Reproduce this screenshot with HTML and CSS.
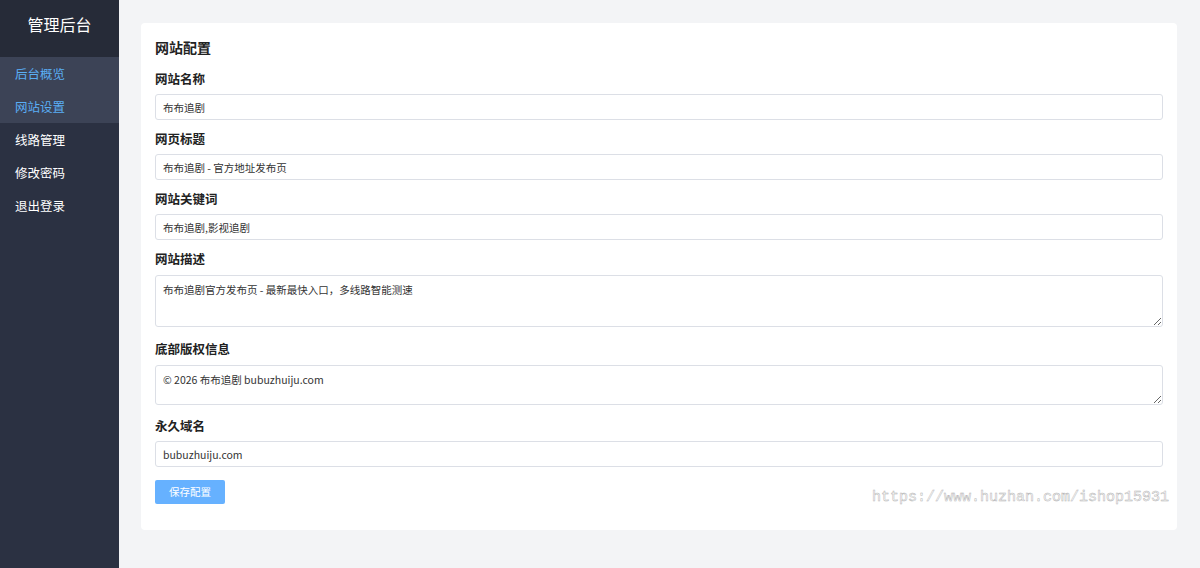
FILE: index.html
```html
<!DOCTYPE html>
<html lang="zh-CN">
<head>
    <meta charset="UTF-8">
    <meta name="viewport" content="width=device-width, initial-scale=1.0">
    <title>网站设置 - 管理后台</title>
    <link rel="stylesheet" href="styles.css">
</head>
<body>
    <div class="layout">
        <aside class="sidebar">
            <div class="brand">管理后台</div>
            <nav class="menu">
                <a class="menu-item active" href="#">后台概览</a>
                <a class="menu-item active" href="#">网站设置</a>
                <a class="menu-item" href="#">线路管理</a>
                <a class="menu-item" href="#">修改密码</a>
                <a class="menu-item" href="#">退出登录</a>
            </nav>
        </aside>

        <main class="main">
            <div class="card">
                <h2 class="card-title">网站配置</h2>
                <form class="form">
                    <div class="field">
                        <label>网站名称</label>
                        <input type="text" value="布布追剧">
                    </div>
                    <div class="field">
                        <label>网页标题</label>
                        <input type="text" value="布布追剧 - 官方地址发布页">
                    </div>
                    <div class="field">
                        <label>网站关键词</label>
                        <input type="text" value="布布追剧,影视追剧">
                    </div>
                    <div class="field">
                        <label>网站描述</label>
                        <textarea class="tall">布布追剧官方发布页 - 最新最快入口，多线路智能测速</textarea>
                    </div>
                    <div class="field">
                        <label>底部版权信息</label>
                        <textarea class="short">© 2026 布布追剧 bubuzhuiju.com</textarea>
                    </div>
                    <div class="field">
                        <label>永久域名</label>
                        <input type="text" value="bubuzhuiju.com">
                    </div>
                    <button type="button" class="btn">保存配置</button>
                </form>
                <div class="watermark">https://www.huzhan.com/ishop15931</div>
            </div>
        </main>
    </div>
</body>
</html>
```

FILE: styles.css
```css
* {
    box-sizing: border-box;
}
body {
    margin: 0;
    font-family: "Microsoft YaHei", "Noto Sans CJK SC", "Noto Sans", sans-serif;
    color: #333;
    background: #f3f4f6;
}
.layout {
    display: flex;
    min-height: 100vh;
}
.sidebar {
    width: 119px;
    flex-shrink: 0;
    background: #2b3142;
    color: #fff;
}
.brand {
    height: 57px;
    padding-top: 13px;
    line-height: 22px;
    text-align: center;
    font-size: 16px;
    background: #262b38;
}
.menu {
    display: flex;
    flex-direction: column;
}
.menu-item {
    height: 33px;
    line-height: 33px;
    padding-left: 15px;
    font-size: 12.5px;
    color: #fff;
    text-decoration: none;
}
.menu-item.active {
    background: #3c4356;
    color: #5aaef5;
}
.main {
    flex: 1;
    padding: 23px 23px 0 22px;
}
.card {
    position: relative;
    background: #fff;
    border-radius: 4px;
    padding: 14px 14px 26px;
    height: 507px;
}
.card-title {
    margin: 0 0 13px;
    font-size: 14px;
    line-height: 20px;
    font-weight: bold;
    color: #222;
}
.field label {
    display: block;
    font-size: 12.5px;
    line-height: 18px;
    font-weight: bold;
    color: #222;
    margin-bottom: 6px;
}
.field input,
.field textarea {
    display: block;
    width: 100%;
    border: 1px solid #dcdfe6;
    border-radius: 3px;
    padding: 0 7px;
    font-family: inherit;
    font-size: 10.5px;
    color: #333;
    margin-bottom: 10px;
}
.field input {
    height: 26px;
}
.field textarea {
    padding-top: 6px;
    line-height: 15px;
    margin-top: 7px;
    margin-bottom: 13px;
}
.field textarea.tall {
    height: 52px;
}
.field textarea.short {
    height: 40px;
    margin-bottom: 12px;
}
.btn {
    margin-top: 2px;
    width: 70px;
    height: 24px;
    border: none;
    border-radius: 2px;
    background: #66b1ff;
    color: #fff;
    font-family: inherit;
    font-size: 10.5px;
    cursor: pointer;
}
.watermark {
    position: absolute;
    right: 8px;
    bottom: 24px;
    font-family: "Liberation Mono", "DejaVu Sans Mono", monospace;
    font-size: 15px;
    color: #fff;
    -webkit-text-stroke: 0.5px #b4b4b4;
}
```
